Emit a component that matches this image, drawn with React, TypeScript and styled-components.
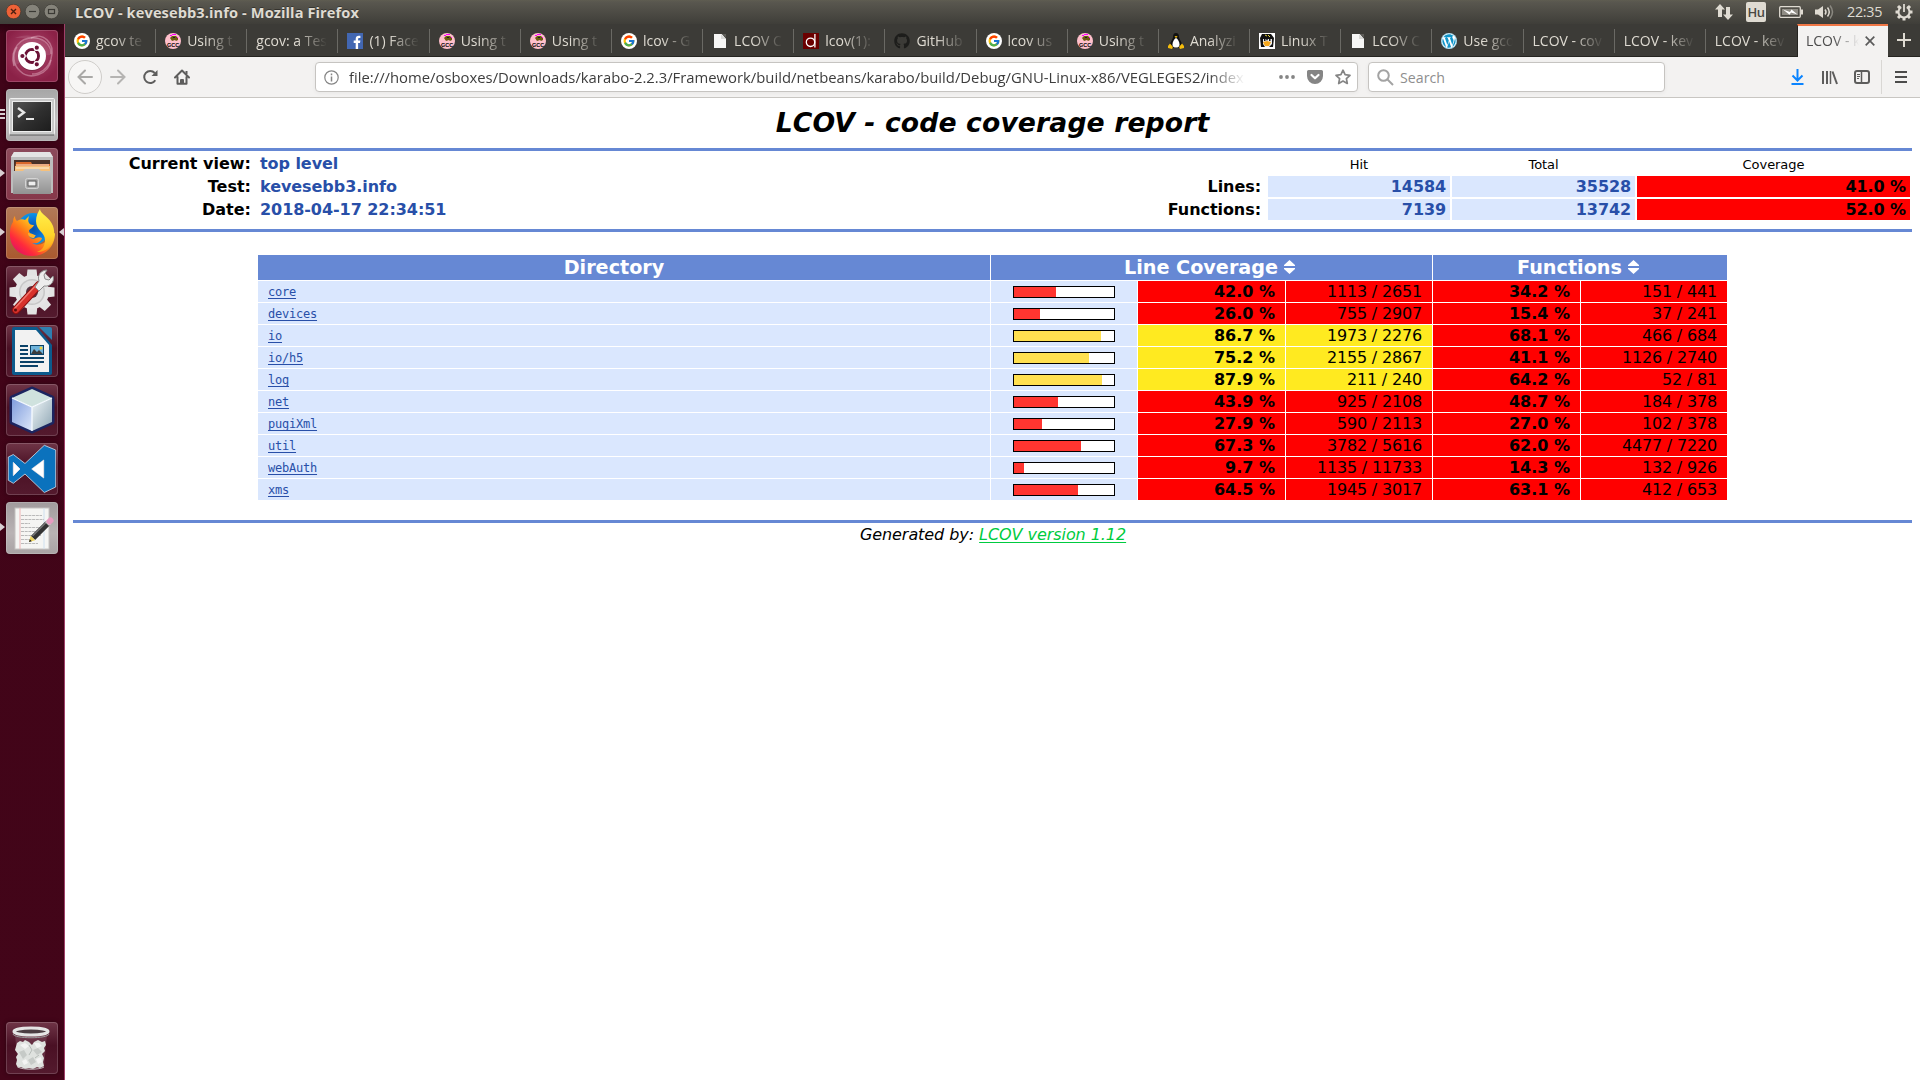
import React from "react";
import styled, { createGlobalStyle } from "styled-components";
import { FcGoogle } from "react-icons/fc";
import { FaGithub, FaWordpress } from "react-icons/fa";

const ui = `"Open Sans", "Noto Sans", sans-serif`;

const GlobalStyle = createGlobalStyle`
  *, *::before, *::after { box-sizing: border-box; }
  body { margin: 0; background: #fff; overflow: hidden; }
  svg { display: block; flex: none; }
`;

const Desktop = styled.div`
  width: 1920px;
  height: 1080px;
  display: flex;
  flex-direction: column;
  overflow: hidden;
`;

/* ---------- top panel ---------- */

const TopPanel = styled.header`
  height: 24px;
  flex: none;
  display: flex;
  align-items: center;
  padding: 0 7px 0 6px;
  background: linear-gradient(#5f5d51 0, #59574f 2px, #3f3e39 100%);
  color: #dfdbd2;
  font-family: ${ui};
`;

const WindowButtons = styled.div`
  display: flex;
  gap: 3px;
  width: 69px;
`;

const WindowTitle = styled.div`
  flex: 1;
  font-size: 14.6px;
  font-weight: 700;
  line-height: 22px;
  padding-bottom: 1px;
  letter-spacing: 0.1px;
  text-shadow: 0 -1px 0 rgba(0, 0, 0, 0.35);
`;

const Indicators = styled.div`
  display: flex;
  align-items: center;
  height: 24px;
`;

const KeyboardLayout = styled.div`
  width: 20px;
  height: 20px;
  margin: 0 13px 0 13px;
  border-radius: 2px;
  background: #dfdbd2;
  color: #4a4943;
  font-size: 13px;
  line-height: 20px;
  font-weight: 600;
  text-align: center;
  letter-spacing: -0.6px;
`;

const Clock = styled.div`
  width: 37px;
  margin: 0 11px 0 12px;
  font-size: 14.4px;
  line-height: 22px;
  padding-bottom: 1px;
  letter-spacing: -0.3px;
  white-space: nowrap;
`;

/* ---------- launcher ---------- */

const Workspace = styled.div`
  flex: 1;
  min-height: 0;
  display: flex;
`;

const LauncherBar = styled.nav`
  width: 65px;
  flex: none;
  display: flex;
  flex-direction: column;
  gap: 7px;
  padding: 6px 0 6px 6px;
  background: linear-gradient(#2b0210 0, #400418 10px, #430519 100%);
  border-right: 1px solid #a04069;
`;

const Tile = styled.div<{ $bg: string; $last?: boolean }>`
  position: relative;
  width: 52px;
  height: 52px;
  flex: none;
  margin-top: ${(p) => (p.$last ? "auto" : "0")};
  border-radius: 4px;
  background: ${(p) => p.$bg};
  box-shadow: inset 0 0 0 1px rgba(255, 255, 255, 0.17), 0 0 4px rgba(0, 0, 0, 0.35);
`;

const Pip = styled.span<{ $right?: boolean; $top?: number }>`
  position: absolute;
  top: ${(p) => p.$top ?? 21}px;
  ${(p) => (p.$right ? "right: -6px;" : "left: -6px;")}
  border: 4px solid transparent;
  ${(p) =>
    p.$right
      ? "border-left-width: 0; border-right: 5px solid #d8cfd2;"
      : "border-right-width: 0; border-left: 5px solid #d8cfd2;"}
`;

const Dashes = styled.span`
  position: absolute;
  left: -6px;
  top: 20px;
  display: grid;
  gap: 2px;
  i {
    width: 5px;
    height: 2px;
    background: #d8cfd2;
  }
`;

/* ---------- browser ---------- */

const Browser = styled.main`
  flex: 1;
  min-width: 0;
  display: flex;
  flex-direction: column;
  background: #fff;
`;

const TabStrip = styled.div`
  height: 33px;
  flex: none;
  display: flex;
  background: #3c3b37;
  border-bottom: 1px solid #252420;
  font-family: ${ui};
  font-size: 14px;
`;

const TabBox = styled.div<{ $active?: boolean; $divider?: boolean }>`
  position: relative;
  width: ${(p) => (p.$active ? "91px" : "91.17px")};
  height: ${(p) => (p.$active ? "33px" : "32px")};
  flex: none;
  display: flex;
  align-items: center;
  gap: 6px;
  padding: ${(p) => (p.$active ? "0 13px 1px 8px" : "2px 11px 0 9px")};
  color: ${(p) => (p.$active ? "#4c4c4c" : "#dfdbd2")};
  background: ${(p) => (p.$active ? "#f3f2f1" : "transparent")};
  border-top: ${(p) => (p.$active ? "2px solid #f07746" : "0 solid")};
  border-left: ${(p) => (p.$active ? "1px solid #252420" : "0 solid")};
  &::after {
    content: "";
    display: ${(p) => (p.$divider ? "block" : "none")};
    position: absolute;
    right: 0;
    top: 5px;
    width: 1px;
    height: 24px;
    background: #6a6964;
  }
`;

const TabLabel = styled.span<{ $fade?: number }>`
  flex: 1;
  min-width: 0;
  overflow: hidden;
  white-space: nowrap;
  line-height: 20px;
  mask-image: linear-gradient(to left, transparent 0, #000 ${(p) => p.$fade ?? 30}px);
`;

const NewTab = styled.div`
  flex: 1;
  display: flex;
  align-items: center;
  justify-content: center;
`;

const NavBar = styled.div`
  height: 41px;
  flex: none;
  display: flex;
  align-items: center;
  padding: 0 13px 0 3px;
  background: #f3f2f1;
  border-bottom: 1px solid #c8c6c2;
  font-family: ${ui};
`;

const BackButton = styled.div`
  width: 34px;
  height: 34px;
  border: 1px solid #cfcdca;
  border-radius: 50%;
  background: #f7f6f5;
  display: grid;
  place-items: center;
`;

const NavButtons = styled.div`
  width: 247px;
  display: flex;
  align-items: center;
  svg + svg { margin-left: 16px; }
  ${BackButton} + svg { margin: 0 0 0 8px; }
`;

const Field = styled.div<{ $w: number; $gap?: number }>`
  width: ${(p) => p.$w}px;
  height: 30px;
  margin-left: ${(p) => p.$gap ?? 0}px;
  flex: none;
  display: flex;
  align-items: center;
  padding: 0 6px 0 8px;
  background: #fff;
  border: 1px solid #c6c4c1;
  border-radius: 4px;
  box-shadow: 0 1px 4px rgba(0, 0, 0, 0.05);
`;

const Address = styled.div`
  width: 896px;
  margin-left: 10px;
  overflow: hidden;
  white-space: nowrap;
  font-size: 14.84px;
  line-height: 22px;
  color: #3d3d3d;
  mask-image: linear-gradient(to left, transparent 0, #000 36px);
`;

const FieldIcons = styled.div`
  margin-left: auto;
  display: flex;
  align-items: center;
  gap: 12px;
`;

const SearchHint = styled.span`
  margin-left: 6px;
  font-size: 14.2px;
  color: #8e8e8e;
`;

const ToolIcons = styled.div`
  margin-left: auto;
  display: flex;
  align-items: center;
`;

const Divider = styled.i`
  width: 1px;
  height: 34px;
  margin: 0 13px 0 11px;
  background: #d9d7d4;
`;

/* ---------- report ---------- */

const Report = styled.article`
  flex: 1;
  padding: 7px 8px 0;
  font-family: "DejaVu Sans", sans-serif;
  font-size: 16px;
  color: #000;
`;

const ReportTitle = styled.h1`
  margin: 0;
  height: 43px;
  font-size: 26.67px;
  line-height: 36px;
  letter-spacing: 0.11px;
  font-style: italic;
  font-weight: 700;
  text-align: center;
`;

const Ruler = styled.div`
  height: 3px;
  background: #6688d4;
`;

const Summary = styled.section`
  height: 78px;
  display: flex;
  justify-content: space-between;
  padding: 2px 2px 0 0;
  font-weight: 700;
  letter-spacing: -0.06px;
`;

const Facts = styled.dl`
  margin: 0;
  display: grid;
  grid-template-columns: 178px auto;
  grid-auto-rows: 23px;
  column-gap: 9px;
  line-height: 21px;
  dt { text-align: right; letter-spacing: 0; }
  dd { margin: 0; color: #284fa8; }
`;

const Totals = styled.div`
  display: grid;
  grid-template-columns: 120px 182px 183px 273px;
  grid-template-rows: 21px 21px 21px;
  gap: 2px;
  line-height: 21px;
`;

const TotalsHead = styled.div`
  font-size: 13px;
  font-weight: 400;
  text-align: center;
  line-height: 23px;
`;

const TotalsLabel = styled.div`
  text-align: right;
  padding-right: 5px;
`;

const TotalsValue = styled.div<{ $bad?: boolean }>`
  text-align: right;
  padding-right: 4px;
  letter-spacing: -0.1px;
  color: ${(p) => (p.$bad ? "#000" : "#284fa8")};
  background: ${(p) => (p.$bad ? "#ff0000" : "#dae7fe")};
`;

const Coverage = styled.section`
  width: 1469px;
  margin: 23px 0 20px 185px;
  display: grid;
  grid-template-columns: 732px 146px 147px 146px 147px 146px;
  grid-template-rows: 25px;
  grid-auto-rows: 21px;
  gap: 1px;
`;

const HeadCell = styled.div<{ $span?: number; $shift: number }>`
  grid-column: span ${(p) => p.$span ?? 1};
  display: flex;
  align-items: center;
  justify-content: center;
  gap: 6px;
  padding: 0 ${(p) => p.$shift}px 1px 0;
  background: #6688d4;
  color: #fff;
  font-size: 19.2px;
  font-weight: 700;
  white-space: nowrap;
`;

const NameCell = styled.div`
  height: 21px;
  padding-left: 10px;
  background: #dae7fe;
  font-family: "DejaVu Sans Mono", monospace;
  font-size: 12px;
  line-height: 22px;
  letter-spacing: -0.22px;
`;

const DirLink = styled.a`
  color: #284fa8;
  text-decoration: underline;
  text-underline-offset: 2px;
  text-decoration-thickness: 1px;
  text-decoration-skip-ink: none;
`;

const BarCell = styled.div`
  display: flex;
  justify-content: center;
  padding-top: 5px;
  background: #dae7fe;
`;

const Bar = styled.div`
  width: 102px;
  height: 12px;
  border: 1px solid #000;
  background: #fff;
`;

const Fill = styled.div<{ $mid: boolean }>`
  height: 10px;
  background: ${(p) => (p.$mid ? "#ffe050" : "#ff3530")};
`;

const ValueCell = styled.div<{ $mid?: boolean; $strong?: boolean }>`
  padding-right: 10px;
  text-align: right;
  line-height: 21px;
  font-weight: ${(p) => (p.$strong ? 700 : 400)};
  letter-spacing: ${(p) => (p.$strong ? "0" : "-0.18px")};
  background: ${(p) => (p.$mid ? "#ffea20" : "#ff0000")};
`;

const Footer = styled.footer`
  padding: 1px 0 0 1px;
  line-height: 21px;
  letter-spacing: -0.06px;
  font-style: italic;
  text-align: center;
  a { color: #00cb40; text-underline-offset: 2px; text-decoration-skip-ink: none; }
`;

/* ---------- favicons ---------- */

const Google = () => (
  <svg width="16" height="16" viewBox="0 0 16 16">
    <circle cx="8" cy="8" r="8" fill="#fff" />
    <FcGoogle x="1.5" y="1.5" size={13} />
  </svg>
);

const Gcc = () => (
  <svg width="16" height="16" viewBox="0 0 16 16">
    <circle cx="8" cy="8" r="8" fill="#ffc0cb" />
    <path d="M5 5l2-2h4l2 2v2l-2 1-1-1-3 1z" fill="#6b5a10" />
    <path d="M7 1h4v1H7zM5 2h2v1H5zM12 4h1v1h-1z" fill="#f0f" />
    <path d="M8 4h2v1H8z" fill="#222" />
    <text x="8" y="14" fontSize="5.5" fontWeight="700" textAnchor="middle" fontFamily="Liberation Sans" fill="#000">GCC</text>
  </svg>
);

const Facebook = () => (
  <svg width="16" height="16" viewBox="0 0 16 16">
    <rect width="16" height="16" fill="#4267b2" />
    <path d="M8.700 16V10H6.700V7.600h2V6c0-2.100 1.200-3.200 3.100-3.200.8 0 1.600.1 1.600.1v2.200h-1c-1 0-1.300.5-1.300 1.200v1.300h2.300L13 10h-1.900v6z" fill="#fff" />
  </svg>
);

const Doc = () => (
  <svg width="16" height="16" viewBox="0 0 16 16">
    <path d="M2 1h8l4 5v9H2z" fill="#f6f6f5" />
    <path d="M10 1h4v4z" fill="#5d5c58" />
    <path d="M9 1v5h5z" fill="#d9d9d7" />
  </svg>
);

const Die = () => (
  <svg width="16" height="16" viewBox="0 0 16 16" fill="none" stroke="#fff" strokeWidth="1.300">
    <rect width="16" height="16" fill="#6b0000" stroke="none" />
    <circle cx="7.500" cy="9.300" r="4.200" />
    <path d="M11.900 1v13.500" />
  </svg>
);

const Tux = () => (
  <svg width="16" height="16" viewBox="0 0 16 16">
    <path d="M8 0c2 0 3 1.400 3 4 0 2 3 5 3 8l-2 3H4l-2-3c0-3 3-6 3-8 0-2.600 1-4 3-4z" fill="#111" />
    <path d="M8 5c2 1 3.500 4 3.500 6.500S10 14.500 8 14.500s-3.500-.5-3.500-3S6 6 8 5z" fill="#fff" />
    <path d="M6.500 3.600L8 3l1.600.6L8 5z" fill="#f5bd0c" />
    <path d="M0 13l2-2.500 3 3.500-1 2-4-1zM16 13l-2-2.500-3 3.500 1 2 4-1z" fill="#f5bd0c" />
  </svg>
);

const TuxFace = () => (
  <svg width="16" height="16" viewBox="0 0 16 16">
    <rect width="16" height="16" fill="#fff" />
    <path d="M3 1h9l3 4-1 9H2L1 5z" fill="#111" />
    <path d="M4 6h3l1 2 1-2h4v5l-3 3H6l-2-3z" fill="#eee" />
    <path d="M4 9l4-1 4 1-2 4H6z" fill="#f7a81b" />
    <path d="M5 6h1.500v2H5zM10 6h1.500v2H10z" fill="#111" />
    <path d="M6 2l2 1M9 2l2 2" stroke="#e8d23a" />
  </svg>
);

const GithubIcon = () => <FaGithub size={16} color="#1d1d1b" />;

const Wordpress = () => (
  <svg width="16" height="16" viewBox="0 0 16 16">
    <circle cx="8" cy="8" r="8" fill="#fff" />
    <FaWordpress size={16} color="#0f94c9" />
  </svg>
);

type TabData = { label: string; icon?: React.FC };

const tabs: TabData[] = [
  { label: "gcov te", icon: Google },
  { label: "Using t", icon: Gcc },
  { label: "gcov: a Tes" },
  { label: "(1) Face", icon: Facebook },
  { label: "Using t", icon: Gcc },
  { label: "Using t", icon: Gcc },
  { label: "lcov - G", icon: Google },
  { label: "LCOV C", icon: Doc },
  { label: "lcov(1):", icon: Die },
  { label: "GitHub", icon: GithubIcon },
  { label: "lcov us", icon: Google },
  { label: "Using t", icon: Gcc },
  { label: "Analyzi", icon: Tux },
  { label: "Linux T", icon: TuxFace },
  { label: "LCOV C", icon: Doc },
  { label: "Use gco", icon: Wordpress },
  { label: "LCOV - cov" },
  { label: "LCOV - kev" },
  { label: "LCOV - kev" },
];

/* ---------- launcher artwork ---------- */

const Art = ({ children }: { children: React.ReactNode }) => (
  <svg width="52" height="52" viewBox="0 0 52 52">{children}</svg>
);

const UbuntuArt = () => (
  <Art>
    <g fill="none" stroke="#e9bccb" strokeOpacity=".45" strokeWidth="1.500">
      <path d="M8 36C3 19 15 6 30 8c9 1 15 8 15 16" />
      <path d="M25 8C36 2 50 12 45 29c-3 10-11 15-19 15" />
      <path d="M45 30C43 44 24 51 14 41 7 35 6 24 11 17" />
    </g>
    <path d="M9 8C20 2 42 6 45 25L26 26 8 36C4 26 10 12 24 8" fill="#fff" opacity=".1" />
    <circle cx="26" cy="27" r="14" fill="#000" opacity=".2" />
    <circle cx="26" cy="26" r="14" fill="#fff" />
    <circle cx="26" cy="26" r="6.500" fill="none" stroke="#6b1236" strokeWidth="3" />
    <path d="M26 26h-11M26 26l5.500-9.500M26 26l5.500 9.500" stroke="#fff" strokeWidth="1" />
    <g stroke="#fff" strokeWidth="1.200" fill="#6b1236">
      <circle cx="16.400" cy="26" r="2.700" />
      <circle cx="30.800" cy="17.700" r="2.700" />
      <circle cx="30.800" cy="34.300" r="2.700" />
    </g>
    <circle cx="26" cy="26" r="5" fill="#fff" />
  </Art>
);

const TerminalArt = () => (
  <Art>
    <defs>
      <linearGradient id="screen" x1="0" y1="0" x2="1" y2="1">
        <stop offset="0" stopColor="#555" /><stop offset=".5" stopColor="#303030" /><stop offset="1" stopColor="#1d1d1d" />
      </linearGradient>
    </defs>
    <rect x="3.500" y="9.500" width="45" height="36" rx="1" fill="#c9c9c9" stroke="#f0f0f0" />
    <path d="M4 46h44" stroke="#777" strokeWidth="1.500" />
    <rect x="6" y="12" width="40" height="31" fill="#eee" />
    <rect x="7" y="13" width="38" height="29" fill="url(#screen)" />
    <path d="M12 19l6 4.500-6 4.500" fill="none" stroke="#e8e8e8" strokeWidth="2.400" />
    <path d="M20 30h8" stroke="#e8e8e8" strokeWidth="2" />
  </Art>
);

const FilesArt = () => (
  <Art>
    <defs>
      <linearGradient id="drawer" x1="0" y1="0" x2="0" y2="1">
        <stop offset="0" stopColor="#c4c4c4" /><stop offset="1" stopColor="#929292" />
      </linearGradient>
    </defs>
    <path d="M8 4h36l3 5v36H5V9z" fill="#bdbdbd" />
    <path d="M8 4h36l3 5H5z" fill="#e4e4e4" />
    <rect x="8" y="12" width="36" height="12" fill="#4a3229" />
    <path d="M10 14h15l1 2h18v7H9z" fill="#d9682c" />
    <path d="M9 18h35v6H9z" fill="#f6c07b" />
    <path d="M10 17h33M10 20h33" stroke="#fff0d8" />
    <path d="M7 23h10l2-2h14l2 2h10v23H7z" fill="url(#drawer)" />
    <rect x="19.500" y="30.500" width="13" height="10" rx="2" fill="#aaa" stroke="#d4d4d4" />
    <rect x="22" y="33" width="8" height="5" fill="#eee" stroke="#555" />
  </Art>
);

const FirefoxArt = () => (
  <Art>
    <defs>
      <linearGradient id="fox" x1=".9" y1=".1" x2=".15" y2=".9">
        <stop offset="0" stopColor="#fff44f" /><stop offset=".3" stopColor="#ffc01e" /><stop offset=".55" stopColor="#ff7a18" /><stop offset=".8" stopColor="#ff2a3c" /><stop offset="1" stopColor="#e3155f" />
      </linearGradient>
      <radialGradient id="globe"><stop offset="0" stopColor="#0a4fa8" /><stop offset=".6" stopColor="#0a75d8" /><stop offset="1" stopColor="#0a96e8" /></radialGradient>
      <linearGradient id="tail" x1="0" y1="0" x2="0" y2="1"><stop offset="0" stopColor="#fff24d" /><stop offset=".6" stopColor="#ffd42a" /><stop offset="1" stopColor="#ff9a1c" /></linearGradient>
    </defs>
    <circle cx="27" cy="22" r="16" fill="url(#globe)" />
    <path d="M9 9c0 3 1 4 2 5 3-2 6-2 8-1l4-4c-1 4-1 5 0 7 1 2 4 2 5 2-1 3-5 4-5 6 0 1 2 2 0 3-1 3 3 6 7 4 2-1 4-1 6 0-1 4-5 6-10 5 8 5 18-1 18-13 3 5 5 3 5 3 0 14-10 23-23 23C12 49 3 38 4 26c0-5 1-8 3-11 0-3 1-5 2-6z" fill="url(#fox)" />
    <path d="M34 2c0 5 10 8 13 17 2 6 2 14-3 20-3 4-8 6-13 6 6-2 8-7 8-12 0-8-9-9-9-19 0-5 2-9 4-12z" fill="url(#tail)" />
    <path d="M22 26c4 0 7 3 8 2l-2 3c-3 0-6-1-6-5z" fill="#ffb02a" />
  </Art>
);

const SettingsArt = () => (
  <Art>
    <g transform="translate(26 26)">
      {[0, 45, 90, 135, 180, 225, 270, 315].map((a) => (
        <path key={a} d="M-5.500-14L-4.500-22.500h9L5.500-14z" fill="#e3e3e3" transform={`rotate(${a})`} />
      ))}
      <circle r="17" fill="#e6e6e6" />
      <circle r="13" fill="#c7c7c7" />
      <circle r="11.500" fill="#e0e0e0" />
      <circle r="6" fill="#55303f" />
    </g>
    <path d="M10 44L33 19" stroke="#8d1010" strokeWidth="8" strokeLinecap="round" />
    <path d="M10 44L33 19" stroke="#d8322c" strokeWidth="6" strokeLinecap="round" />
    <path d="M9 42L31 18" stroke="#f1776c" strokeWidth="1.500" strokeLinecap="round" />
    <circle cx="9.500" cy="44" r="1.500" fill="#5d0c0c" />
    <path d="M29 21l4-6c-2-6 2-11 8-11l-3 5 1 4 4 1 4-4c2 6-3 11-9 10l-5 5z" fill="#ededed" stroke="#8b8b8b" />
  </Art>
);

const WriterArt = () => (
  <Art>
    <path d="M8 2h23l15 18v28a2 2 0 0 1-2 2H8a2 2 0 0 1-2-2V4a2 2 0 0 1 2-2z" fill="#0c5a8c" />
    <path d="M9 5h21l13 15v27H9z" fill="#f2f2f2" />
    <path d="M33 2h11a2 2 0 0 1 2 2v11z" fill="#2f7fb0" />
    <path d="M14 21h8M14 25h8M14 29h8M14 33h24M14 37h24M14 41h18" stroke="#0b4268" strokeWidth="2" />
    <rect x="24.500" y="20.500" width="13" height="9" fill="#6fb4dc" stroke="#0b4268" />
    <path d="M25 29l3-5 3 3 2-2 4 4z" fill="#3c3c3c" />
    <circle cx="35" cy="23" r="1.500" fill="#f0cf3a" />
  </Art>
);

const CubeArt = () => (
  <Art>
    <defs>
      <linearGradient id="cubeLeft" x1="0" y1="0" x2="1" y2="1"><stop offset="0" stopColor="#7e9bdc" /><stop offset="1" stopColor="#dde8fa" /></linearGradient>
      <linearGradient id="cubeRight" x1="0" y1="0" x2="1" y2="1"><stop offset="0" stopColor="#f0f6f8" /><stop offset="1" stopColor="#8ea6b4" /></linearGradient>
    </defs>
    <path d="M26 5l20 9v24L26 47 6 38V14z" stroke="#1c2560" strokeWidth="5" strokeLinejoin="round" fill="#1c2560" />
    <path d="M26 5l20 9-20 9L6 14z" fill="#cfe2de" />
    <path d="M6 14l20 9v24L6 38z" fill="url(#cubeLeft)" />
    <path d="M46 14l-20 9v24l20-9z" fill="url(#cubeRight)" />
    <path d="M6 14l20 9 20-9M26 23v24" fill="none" stroke="#f6fbff" strokeWidth="1.300" />
  </Art>
);

const CodeArt = () => (
  <Art>
    <path fillRule="evenodd" stroke="#cfe0ee" strokeWidth=".8" fill="#0b72bd" d="M2.300 14l5-2.500L19 20.500 38.300 2.300 49.700 7v37l-11.400 5.500L19 31 7.300 40.300l-5-3zM7.300 19.300v13.400L14 26zM37.700 17L25.700 26l12 9z" />
    <path d="M7.300 19.300v13.400L14 26zM37.700 17L25.700 26l12 9z" fill="#fff" />
  </Art>
);

const EditorArt = () => (
  <Art>
    <rect x="9" y="6" width="34" height="41" fill="#f5f5f3" stroke="#c4c2c0" />
    <path d="M14 6v41" stroke="#f0b5b5" />
    <path d="M38 6v41" stroke="#cfe0ef" />
    <path d="M15 13.500h21M15 17.500h23M15 21.500h9M15 25.500h21M15 29.500h17M15 33.500h20M15 37.500h13M15 41.500h17" stroke="#b9b9b9" strokeDasharray="3 .7" />
    <path d="M27 36L42 21" stroke="#333" strokeWidth="6" />
    <path d="M26.500 34L40 20.500" stroke="#777" strokeWidth="1.500" />
    <path d="M23 40l1.700-6.200 4.500 4.500z" fill="#ecd35c" />
    <path d="M23 40l.8-2.800 2 2z" fill="#222" />
    <path d="M41 22l2-2" stroke="#ccc" strokeWidth="6" />
    <path d="M43.500 19.500l1-1" stroke="#e89bc0" strokeWidth="6" strokeLinecap="round" />
  </Art>
);

const TrashArt = () => (
  <Art>
    <path d="M9 12l3 33c0 3 26 3 26 0l3-33z" fill="#d9c3cc" opacity=".16" />
    <path d="M11 21l3-2 3 1 2-2 4 2 3 3 2-3 4-2 4 2 3-1 1 4-2 3 1 3-3 3 2 4-1 4 1 4-4 2-3-1-4 2-4-1-4 1-4-2-3 1-2-4 1-4-1-3 2-3-3-4z" fill="#dfe2df" />
    <path d="M13 30l5-2 3 5-4 4zM27 28l5-2 4 4-5 3zM22 38l5-3 3 5-5 3z" fill="#c6cac7" />
    <path d="M14 23l5-2 4 3-4 3zM28 21l5 0 3 3-5 2zM16 39l4-2 2 4-4 2zM30 37l5-2 1 5-4 2z" fill="#f3f4f3" />
    <path d="M23 23l3 5-3 5M33 33l-4 3" fill="none" stroke="#aab0ac" strokeWidth=".8" />
    <ellipse cx="25" cy="9.500" rx="17" ry="3.500" fill="#4b3d42" stroke="#e4e4e4" strokeWidth="3" />
    <path d="M7 12c1 5 35 5 36 0" fill="none" stroke="#9b9b9b" strokeWidth="1" />
    <path d="M12 45c4 3 22 3 26 0" fill="none" stroke="#bdb0b5" />
  </Art>
);

const glass = "linear-gradient(#6f3547, #4a1024 45%, #541a2e)";
const silver = "linear-gradient(#a6a6a6, #c4c2c3 60%, #adabac)";

const launchers = [
  { art: UbuntuArt, bg: "radial-gradient(circle at 50% 45%, #b24a70, #8b2147 75%)" },
  { art: TerminalArt, bg: silver, dashes: true },
  { art: FilesArt, bg: "linear-gradient(#8c4a5b, #86374a)", left: 21 },
  { art: FirefoxArt, bg: "linear-gradient(#b27a58, #a9592f)", left: 21, right: true },
  { art: SettingsArt, bg: glass },
  { art: WriterArt, bg: glass },
  { art: CubeArt, bg: glass },
  { art: CodeArt, bg: glass },
  { art: EditorArt, bg: "linear-gradient(#a19b9d, #b9b3b4 60%, #a9a3a4)", left: 21 },
];

/* ---------- report data ---------- */

const rows = [
  ["core", 42.0, "1113 / 2651", "34.2", "151 / 441"],
  ["devices", 26.0, "755 / 2907", "15.4", "37 / 241"],
  ["io", 86.7, "1973 / 2276", "68.1", "466 / 684"],
  ["io/h5", 75.2, "2155 / 2867", "41.1", "1126 / 2740"],
  ["log", 87.9, "211 / 240", "64.2", "52 / 81"],
  ["net", 43.9, "925 / 2108", "48.7", "184 / 378"],
  ["pugiXml", 27.9, "590 / 2113", "27.0", "102 / 378"],
  ["util", 67.3, "3782 / 5616", "62.0", "4477 / 7220"],
  ["webAuth", 9.7, "1135 / 11733", "14.3", "132 / 926"],
  ["xms", 64.5, "1945 / 3017", "63.1", "412 / 653"],
] as [string, number, string, string, string][];

const barWidth = (lines: string) => {
  const [hit, total] = lines.split(" / ").map(Number);
  return Math.round((hit / total) * 100);
};

const SortIcon = () => (
  <svg width="11" height="14" viewBox="0 0 11 14" fill="#fff">
    <path d="M5.500 0L11 5v1H0V5zM5.500 14L11 9V8H0v1z" />
  </svg>
);

const Launcher = () => (
  <LauncherBar>
    {launchers.map(({ art: Picture, bg, dashes, left, right }, i) => (
      <Tile key={i} $bg={bg}>
        <Picture />
        {dashes && <Dashes><i /><i /><i /></Dashes>}
        {left && <Pip $top={left} />}
        {right && <Pip $right />}
      </Tile>
    ))}
    <Tile $bg={glass} $last><TrashArt /></Tile>
  </LauncherBar>
);

const VolumeIcon = styled.svg`
  margin-left: 11px;
`;

const Panel = () => (
  <TopPanel>
    <WindowButtons>
      <svg width="54" height="16" viewBox="0 0 54 16">
        <circle cx="7.500" cy="7.500" r="7.300" fill="#ee6237" stroke="#34332e" strokeWidth=".6" />
        <path d="M5 5l5 5M10 5l-5 5" stroke="#4b1f10" strokeWidth="1.400" />
        <circle cx="26.500" cy="7.500" r="7.300" fill="#85837a" stroke="#34332e" strokeWidth=".6" />
        <path d="M23 7.500h7" stroke="#3a3934" strokeWidth="1.200" />
        <circle cx="45.500" cy="7.500" r="7.300" fill="#85837a" stroke="#34332e" strokeWidth=".6" />
        <rect x="42.500" y="5.500" width="6" height="4" fill="none" stroke="#3a3934" strokeWidth="1.200" />
      </svg>
    </WindowButtons>
    <WindowTitle>LCOV - kevesebb3.info - Mozilla Firefox</WindowTitle>
    <Indicators>
      <svg width="18" height="18" viewBox="0 0 18 18" fill="#dfdbd2">
        <path d="M5 1l5 5.500H7V14H3V6.500H0zM13 17l5-5.500h-3V4h-4v7.500H8z" />
      </svg>
      <KeyboardLayout>Hu</KeyboardLayout>
      <svg width="24" height="14" viewBox="0 0 24 14">
        <rect x=".7" y="1.700" width="20.600" height="10.600" rx="1" fill="none" stroke="#dfdbd2" strokeWidth="1.300" />
        <rect x="3" y="4" width="16" height="6" fill="#8f8c84" />
        <path d="M22 4.500h2v5h-2z" fill="#dfdbd2" />
        <path d="M4 4.500l7 2.500 1.500-2.500 6 5-6.500-2-1.500 2.300z" fill="#fff" />
      </svg>
      <VolumeIcon width="21" height="16" viewBox="0 0 21 16">
        <path d="M1 5.500h3L9 2v12l-5-3.500H1z" fill="#dfdbd2" />
        <path d="M11 5.500q2 2.500 0 5M13.500 3.500q3.500 4.500 0 9" fill="none" stroke="#dfdbd2" strokeWidth="1.500" />
        <path d="M16 1.500q5 6.500 0 13" fill="none" stroke="#8a8880" strokeWidth="1.500" />
      </VolumeIcon>
      <Clock>22:35</Clock>
      <svg width="18" height="18" viewBox="-9 -9 18 18">
        {[45, 90, 135, 180, 225, 270, 315].map((a) => (
          <path key={a} d="M-1.500-5.500h3v-3h-3z" fill="#dfdbd2" transform={`rotate(${a})`} />
        ))}
        <path d="M-2.800-4.800a5.500 5.500 0 1 0 5.600 0" fill="none" stroke="#dfdbd2" strokeWidth="2" />
        <path d="M0-8v8" stroke="#dfdbd2" strokeWidth="1.800" />
      </svg>
    </Indicators>
  </TopPanel>
);

const Tabs = () => (
  <TabStrip>
    {tabs.map(({ label, icon: Icon }, i) => (
      <TabBox key={i} $divider={i < tabs.length - 1}>
        {Icon && <Icon />}
        <TabLabel>{label}</TabLabel>
      </TabBox>
    ))}
    <TabBox $active>
      <TabLabel $fade={26}>LCOV - k</TabLabel>
      <svg width="10" height="10" viewBox="0 0 10 10" stroke="#5b5b5b" strokeWidth="1.700">
        <path d="M.7.7l8.600 8.600M9.300.7L.7 9.300" />
      </svg>
    </TabBox>
    <NewTab>
      <svg width="14" height="14" viewBox="0 0 14 14" stroke="#dfdbd2" strokeWidth="2"><path d="M7 0v14M0 7h14" /></svg>
    </NewTab>
  </TabStrip>
);

const Spaced = styled.svg<{ $gap: number }>`
  margin-left: ${(p) => p.$gap}px;
`;

const Navigation = () => (
  <NavBar>
    <NavButtons>
      <BackButton>
        <svg width="16" height="16" viewBox="0 0 16 16" fill="none" stroke="#aaa9a7" strokeWidth="2" strokeLinecap="round"><path d="M15 8H1.500M8 1.500L1.500 8 8 14.500" /></svg>
      </BackButton>
      <svg width="16" height="16" viewBox="0 0 16 16" fill="none" stroke="#b5b4b2" strokeWidth="2" strokeLinecap="round"><path d="M1 8h13.500M8 1.500L14.500 8 8 14.500" /></svg>
      <svg width="16" height="16" viewBox="0 0 16 16" fill="none" stroke="#5d5d5c" strokeWidth="2"><path d="M13.300 11.200A6 6 0 1 1 12.700 4" /><path d="M15.500 1v6h-6z" fill="#5d5d5c" stroke="none" /></svg>
      <svg width="16" height="16" viewBox="0 0 16 16" fill="none" stroke="#5d5d5c" strokeWidth="2" strokeLinejoin="round"><path d="M1 8.500L8 1.500l7 7M3.500 8v6.800h9V8" strokeLinecap="round" /><path d="M7 15v-4h2v4" /><path d="M12.500 2v3" /></svg>
    </NavButtons>
    <Field $w={1043}>
      <svg width="15" height="15" viewBox="0 0 15 15"><circle cx="7.500" cy="7.500" r="6.700" fill="none" stroke="#858585" strokeWidth="1.200" /><path d="M7.500 6.500v5M7.500 3.500v1.700" stroke="#858585" strokeWidth="1.500" /></svg>
      <Address>file:///home/osboxes/Downloads/karabo-2.2.3/Framework/build/netbeans/karabo/build/Debug/GNU-Linux-x86/VEGLEGES2/index</Address>
      <FieldIcons>
        <svg width="16" height="16" viewBox="0 0 16 16" fill="#858585"><circle cx="2" cy="8" r="1.900" /><circle cx="8" cy="8" r="1.900" /><circle cx="14" cy="8" r="1.900" /></svg>
        <svg width="16" height="16" viewBox="0 0 16 16"><path d="M1.500 1h13A1.500 1.500 0 0 1 16 2.500V7A8 8 0 0 1 0 7V2.500A1.500 1.500 0 0 1 1.500 1z" fill="#858585" /><path d="M4.500 6L8 9.300 11.500 6" fill="none" stroke="#fff" strokeWidth="2.200" strokeLinecap="round" strokeLinejoin="round" /></svg>
        <svg width="16" height="16" viewBox="0 0 16 16"><path d="M8 1.200l2.100 4.500 4.900.6-3.600 3.300.9 4.900L8 12.100l-4.300 2.400.9-4.900L1 6.300l4.900-.6z" fill="none" stroke="#858585" strokeWidth="1.700" strokeLinejoin="round" /></svg>
      </FieldIcons>
    </Field>
    <Field $w={297} $gap={10}>
      <svg width="17" height="17" viewBox="0 0 17 17" fill="none" stroke="#a3a3a3" strokeWidth="2"><circle cx="6.500" cy="6.500" r="5.300" /><path d="M10.500 10.500l5.500 5.500" /></svg>
      <SearchHint>Search</SearchHint>
    </Field>
    <ToolIcons>
      <svg width="13" height="16" viewBox="0 0 13 16" fill="none" stroke="#0a84ff" strokeWidth="2"><path d="M6.500 0v11M1.500 6.500l5 5 5-5M.5 15h12" /></svg>
      <Spaced $gap={18} width="16" height="15" viewBox="0 0 16 15" stroke="#5d5d5c" strokeWidth="2"><path d="M1 1v13M5 1v13" /><path d="M8.500 1v13" strokeWidth="1.500" /><path d="M10.500 1.500l4.500 12.500" /></Spaced>
      <Spaced $gap={16} width="16" height="14" viewBox="0 0 16 14" fill="none" stroke="#5d5d5c" strokeWidth="2"><rect x="1" y="1" width="14" height="12" rx="2" /><path d="M7.500 1v12" strokeWidth="1.500" /><path d="M3 4.500h3M3 6.500h3M3 8.500h2" strokeWidth="1" /></Spaced>
      <Divider />
      <svg width="12" height="12" viewBox="0 0 12 12" stroke="#4c4c4b" strokeWidth="2"><path d="M0 1h12M0 6h12M0 11h12" /></svg>
    </ToolIcons>
  </NavBar>
);

const ReportPage = () => (
  <Report>
    <ReportTitle>LCOV - code coverage report</ReportTitle>
    <Ruler />
    <Summary>
      <Facts>
        <dt>Current view:</dt><dd>top level</dd>
        <dt>Test:</dt><dd>kevesebb3.info</dd>
        <dt>Date:</dt><dd>2018-04-17 22:34:51</dd>
      </Facts>
      <Totals>
        <span />
        <TotalsHead>Hit</TotalsHead><TotalsHead>Total</TotalsHead><TotalsHead>Coverage</TotalsHead>
        <TotalsLabel>Lines:</TotalsLabel>
        <TotalsValue>14584</TotalsValue><TotalsValue>35528</TotalsValue><TotalsValue $bad>41.0 %</TotalsValue>
        <TotalsLabel>Functions:</TotalsLabel>
        <TotalsValue>7139</TotalsValue><TotalsValue>13742</TotalsValue><TotalsValue $bad>52.0 %</TotalsValue>
      </Totals>
    </Summary>
    <Ruler />
    <Coverage>
      <HeadCell $shift={20}>Directory</HeadCell>
      <HeadCell $span={3} $shift={4}>Line Coverage <SortIcon /></HeadCell>
      <HeadCell $span={2} $shift={4}>Functions <SortIcon /></HeadCell>
      {rows.map(([name, pct, lines, fnPct, fns]) => {
        const mid = pct >= 75;
        return (
          <React.Fragment key={name}>
            <NameCell><DirLink>{name}</DirLink></NameCell>
            <BarCell><Bar><Fill $mid={mid} style={{ width: `${barWidth(lines)}%` }} /></Bar></BarCell>
            <ValueCell $strong $mid={mid}>{pct.toFixed(1)} %</ValueCell>
            <ValueCell $mid={mid}>{lines}</ValueCell>
            <ValueCell $strong>{fnPct} %</ValueCell>
            <ValueCell>{fns}</ValueCell>
          </React.Fragment>
        );
      })}
    </Coverage>
    <Ruler />
    <Footer>Generated by: <a href="#lcov">LCOV version 1.12</a></Footer>
  </Report>
);

export default function App() {
  return (
    <Desktop>
      <GlobalStyle />
      <Panel />
      <Workspace>
        <Launcher />
        <Browser>
          <Tabs />
          <Navigation />
          <ReportPage />
        </Browser>
      </Workspace>
    </Desktop>
  );
}
